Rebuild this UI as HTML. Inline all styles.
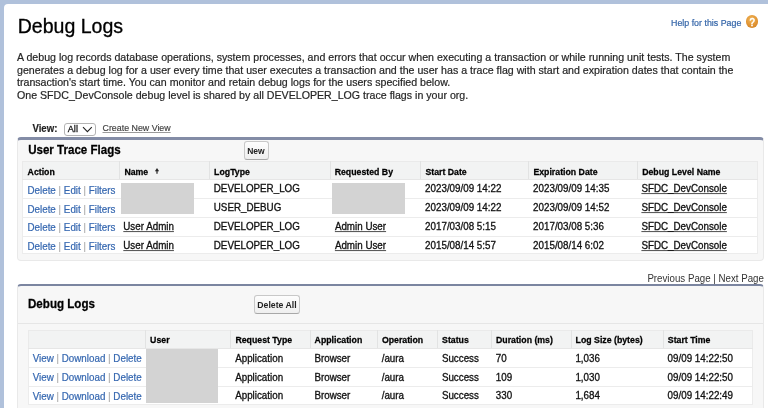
<!DOCTYPE html>
<html><head><meta charset="utf-8">
<style>
*{box-sizing:border-box;margin:0;padding:0}
html,body{width:768px;height:408px;overflow:hidden}
body{background:#b0c1db;font-family:"Liberation Sans",sans-serif;position:relative;color:#000}
.t{position:absolute;white-space:nowrap}
.r{position:absolute}
.lnk{color:#3567b0;-webkit-text-stroke:0.2px #3567b0}
.tb .t, .t.tb{-webkit-text-stroke:0.3px currentColor}
.t.hb{-webkit-text-stroke:0.25px #000}
.sep{color:#9a9a9a;-webkit-text-stroke:0 !important}
.u{text-decoration:underline;text-decoration-color:#555}
.b{font-weight:bold}
</style></head><body>
<div id="wrap" style="position:absolute;left:0;top:0;width:768px;height:408px;overflow:hidden;background:#b0c1db;filter:blur(0.3px)">
<div class="r" style="left:4px;top:4px;width:800px;height:450px;background:#fff;border-radius:4px"></div>
<div class="t " style="left:17.70px;top:15.00px;font-size:19.55px;line-height:22.46px;color:#000;-webkit-text-stroke:0.3px #000">Debug Logs</div>
<div class="t " style="left:671.00px;top:18.00px;font-size:8.85px;line-height:10.17px;transform:scaleY(1.050);transform-origin:0 8.00px;color:#3465a8;-webkit-text-stroke:0.2px #3465a8">Help for this Page</div>
<div class="r" style="left:746.0px;top:15.4px;width:12.4px;height:12.4px;border-radius:50%;background:radial-gradient(circle at 45% 35%,#f3b95a,#de9030 60%,#c97c1e);"></div>
<div class="t " style="left:749.50px;top:17.00px;font-size:9.60px;line-height:11.03px;transform:scaleY(1.100);transform-origin:0 9.00px;color:#fff;-webkit-text-stroke:0.5px #fff">?</div>
<div class="t " style="left:17.00px;top:51.00px;font-size:10.64px;line-height:12.23px;color:#262626;-webkit-text-stroke:0.2px #262626">A debug log records database operations, system processes, and errors that occur when executing a transaction or while running unit tests. The system</div>
<div class="t " style="left:17.00px;top:64.00px;font-size:10.64px;line-height:12.23px;color:#262626;-webkit-text-stroke:0.2px #262626">generates a debug log for a user every time that user executes a transaction and the user has a trace flag with start and expiration dates that contain the</div>
<div class="t " style="left:17.00px;top:76.00px;font-size:10.64px;line-height:12.23px;color:#262626;-webkit-text-stroke:0.2px #262626">transaction's start time. You can monitor and retain debug logs for the users specified below.</div>
<div class="t " style="left:17.00px;top:89.00px;font-size:10.64px;line-height:12.23px;color:#262626;-webkit-text-stroke:0.2px #262626">One SFDC_DevConsole debug level is shared by all DEVELOPER_LOG trace flags in your org.</div>
<div class="t b" style="left:32.40px;top:123.00px;font-size:9.65px;line-height:11.09px;transform:scaleY(1.080);transform-origin:0 9.00px;color:#222;-webkit-text-stroke:0.15px #222">View:</div>
<div class="r" style="left:64.2px;top:123px;width:31.8px;height:12.8px;border:1px solid #b4b4b4;border-radius:3px;background:#fff"></div>
<div class="t " style="left:67.80px;top:124.00px;font-size:9.10px;line-height:10.46px;transform:scaleY(1.060);transform-origin:0 8.00px;color:#111;-webkit-text-stroke:0.25px #111">All</div>
<svg class="r" style="left:81.5px;top:125.6px" width="11" height="7" viewBox="0 0 11 7"><path d="M1 1.2 L5.4 5.6 L9.8 1.2" fill="none" stroke="#222" stroke-width="1.1"/></svg>
<div class="t u" style="left:102.50px;top:123.00px;font-size:8.85px;line-height:10.17px;color:#404040;-webkit-text-stroke:0.15px #404040;text-decoration-color:#9a9a9a">Create New View</div>
<div class="r" style="left:16.50px;top:137.00px;width:747.10px;height:123.50px;background:#f7f7f7;border:1px solid #e9e9e9;border-top:3px solid #838ca6;border-radius:4px"></div>
<div class="t b hb" style="left:28.20px;top:144.00px;font-size:11.55px;line-height:13.27px;transform:scaleY(1.030);transform-origin:0 10.00px;">User Trace Flags</div>
<div class="r" style="left:244.20px;top:141.30px;width:24.50px;height:18.70px;border:1px solid #c8c8c8;border-bottom-color:#a8a8a8;border-radius:3px;background:linear-gradient(#fdfdfd,#efefef)"></div>
<div class="t b" style="left:247.20px;top:147.00px;font-size:8.50px;line-height:9.77px;transform:scaleY(1.120);transform-origin:0 8.00px;color:#222">New</div>
<div class="r" style="left:22.30px;top:161.30px;width:735.70px;height:18.50px;background:#f2f3f3;border:1px solid #eaeaea;border-bottom:none"></div>
<div class="r" style="left:22.30px;top:179.80px;width:735.70px;height:74.70px;background:#fff;border:1px solid #ececec;border-top:none"></div>
<div class="r" style="left:119.20px;top:161.30px;width:1.00px;height:18.50px;background:#e2e3e3"></div>
<div class="r" style="left:208.90px;top:161.30px;width:1.00px;height:18.50px;background:#e2e3e3"></div>
<div class="r" style="left:329.50px;top:161.30px;width:1.00px;height:18.50px;background:#e2e3e3"></div>
<div class="r" style="left:420.20px;top:161.30px;width:1.00px;height:18.50px;background:#e2e3e3"></div>
<div class="r" style="left:528.20px;top:161.30px;width:1.00px;height:18.50px;background:#e2e3e3"></div>
<div class="r" style="left:637.00px;top:161.30px;width:1.00px;height:18.50px;background:#e2e3e3"></div>
<div class="r" style="left:22.30px;top:198.10px;width:735.70px;height:1.00px;background:#ececec"></div>
<div class="r" style="left:22.30px;top:216.90px;width:735.70px;height:1.00px;background:#ececec"></div>
<div class="r" style="left:22.30px;top:235.60px;width:735.70px;height:1.00px;background:#ececec"></div>
<div class="r" style="left:22.30px;top:179.30px;width:735.70px;height:1.00px;background:#e6e6e6"></div>
<div class="t b hb" style="left:27.60px;top:167.00px;font-size:8.75px;line-height:10.05px;transform:scaleY(1.100);transform-origin:0 8.00px;">Action</div>
<div class="t b hb" style="left:124.40px;top:167.00px;font-size:8.75px;line-height:10.05px;transform:scaleY(1.100);transform-origin:0 8.00px;">Name</div>
<div class="t b hb" style="left:214.10px;top:167.00px;font-size:8.75px;line-height:10.05px;transform:scaleY(1.100);transform-origin:0 8.00px;">LogType</div>
<div class="t b hb" style="left:334.70px;top:167.00px;font-size:8.75px;line-height:10.05px;transform:scaleY(1.100);transform-origin:0 8.00px;">Requested By</div>
<div class="t b hb" style="left:425.40px;top:167.00px;font-size:8.75px;line-height:10.05px;transform:scaleY(1.100);transform-origin:0 8.00px;">Start Date</div>
<div class="t b hb" style="left:533.40px;top:167.00px;font-size:8.75px;line-height:10.05px;transform:scaleY(1.100);transform-origin:0 8.00px;">Expiration Date</div>
<div class="t b hb" style="left:642.20px;top:167.00px;font-size:8.75px;line-height:10.05px;transform:scaleY(1.100);transform-origin:0 8.00px;">Debug Level Name</div>
<svg class="r" style="left:154.0px;top:167.0px" width="6" height="8" viewBox="0 0 6 8"><path d="M3 6.8 V3" fill="none" stroke="#222" stroke-width="1.2"/><path d="M0.9 4.3 L3 1.0 L5.1 4.3 Z" fill="#222"/></svg>
<div class="t tb" style="left:27.50px;top:185.00px;font-size:9.80px;line-height:11.26px;transform:scaleY(1.040);transform-origin:0 9.00px;"><span class="lnk">Delete</span> <span class="sep">|</span> <span class="lnk">Edit</span> <span class="sep">|</span> <span class="lnk">Filters</span></div>
<div class="t  tb" style="left:213.80px;top:183.00px;font-size:9.80px;line-height:11.26px;transform:scaleY(1.040);transform-origin:0 9.00px;color:#111">DEVELOPER_LOG</div>
<div class="t  tb" style="left:425.10px;top:183.00px;font-size:9.80px;line-height:11.26px;transform:scaleY(1.040);transform-origin:0 9.00px;color:#111">2023/09/09 14:22</div>
<div class="t  tb" style="left:533.10px;top:183.00px;font-size:9.80px;line-height:11.26px;transform:scaleY(1.040);transform-origin:0 9.00px;color:#111">2023/09/09 14:35</div>
<div class="t u tb" style="left:641.40px;top:183.00px;font-size:9.80px;line-height:11.26px;transform:scaleY(1.040);transform-origin:0 9.00px;color:#111">SFDC_DevConsole</div>
<div class="t tb" style="left:27.50px;top:204.00px;font-size:9.80px;line-height:11.26px;transform:scaleY(1.040);transform-origin:0 9.00px;"><span class="lnk">Delete</span> <span class="sep">|</span> <span class="lnk">Edit</span> <span class="sep">|</span> <span class="lnk">Filters</span></div>
<div class="t  tb" style="left:213.80px;top:202.00px;font-size:9.80px;line-height:11.26px;transform:scaleY(1.040);transform-origin:0 9.00px;color:#111">USER_DEBUG</div>
<div class="t  tb" style="left:425.10px;top:202.00px;font-size:9.80px;line-height:11.26px;transform:scaleY(1.040);transform-origin:0 9.00px;color:#111">2023/09/09 14:22</div>
<div class="t  tb" style="left:533.10px;top:202.00px;font-size:9.80px;line-height:11.26px;transform:scaleY(1.040);transform-origin:0 9.00px;color:#111">2023/09/09 14:52</div>
<div class="t u tb" style="left:641.40px;top:202.00px;font-size:9.80px;line-height:11.26px;transform:scaleY(1.040);transform-origin:0 9.00px;color:#111">SFDC_DevConsole</div>
<div class="t tb" style="left:27.50px;top:222.00px;font-size:9.80px;line-height:11.26px;transform:scaleY(1.040);transform-origin:0 9.00px;"><span class="lnk">Delete</span> <span class="sep">|</span> <span class="lnk">Edit</span> <span class="sep">|</span> <span class="lnk">Filters</span></div>
<div class="t u tb" style="left:123.30px;top:221.00px;font-size:9.80px;line-height:11.26px;transform:scaleY(1.040);transform-origin:0 9.00px;color:#111">User Admin</div>
<div class="t  tb" style="left:213.80px;top:221.00px;font-size:9.80px;line-height:11.26px;transform:scaleY(1.040);transform-origin:0 9.00px;color:#111">DEVELOPER_LOG</div>
<div class="t u tb" style="left:334.90px;top:221.00px;font-size:9.80px;line-height:11.26px;transform:scaleY(1.040);transform-origin:0 9.00px;color:#111">Admin User</div>
<div class="t  tb" style="left:425.10px;top:221.00px;font-size:9.80px;line-height:11.26px;transform:scaleY(1.040);transform-origin:0 9.00px;color:#111">2017/03/08 5:15</div>
<div class="t  tb" style="left:533.10px;top:221.00px;font-size:9.80px;line-height:11.26px;transform:scaleY(1.040);transform-origin:0 9.00px;color:#111">2017/03/08 5:36</div>
<div class="t u tb" style="left:641.40px;top:221.00px;font-size:9.80px;line-height:11.26px;transform:scaleY(1.040);transform-origin:0 9.00px;color:#111">SFDC_DevConsole</div>
<div class="t tb" style="left:27.50px;top:241.00px;font-size:9.80px;line-height:11.26px;transform:scaleY(1.040);transform-origin:0 9.00px;"><span class="lnk">Delete</span> <span class="sep">|</span> <span class="lnk">Edit</span> <span class="sep">|</span> <span class="lnk">Filters</span></div>
<div class="t u tb" style="left:123.30px;top:240.00px;font-size:9.80px;line-height:11.26px;transform:scaleY(1.040);transform-origin:0 9.00px;color:#111">User Admin</div>
<div class="t  tb" style="left:213.80px;top:240.00px;font-size:9.80px;line-height:11.26px;transform:scaleY(1.040);transform-origin:0 9.00px;color:#111">DEVELOPER_LOG</div>
<div class="t u tb" style="left:334.90px;top:240.00px;font-size:9.80px;line-height:11.26px;transform:scaleY(1.040);transform-origin:0 9.00px;color:#111">Admin User</div>
<div class="t  tb" style="left:425.10px;top:240.00px;font-size:9.80px;line-height:11.26px;transform:scaleY(1.040);transform-origin:0 9.00px;color:#111">2015/08/14 5:57</div>
<div class="t  tb" style="left:533.10px;top:240.00px;font-size:9.80px;line-height:11.26px;transform:scaleY(1.040);transform-origin:0 9.00px;color:#111">2015/08/14 6:02</div>
<div class="t u tb" style="left:641.40px;top:240.00px;font-size:9.80px;line-height:11.26px;transform:scaleY(1.040);transform-origin:0 9.00px;color:#111">SFDC_DevConsole</div>
<div class="r" style="left:121.10px;top:182.90px;width:73.10px;height:31.20px;background:#d3d3d3"></div>
<div class="r" style="left:331.80px;top:182.90px;width:73.50px;height:31.20px;background:#d3d3d3"></div>
<div class="t " style="left:647.40px;top:273.00px;font-size:9.72px;line-height:11.17px;transform:scaleY(1.040);transform-origin:0 9.00px;color:#333">Previous Page | Next Page</div>
<div class="r" style="left:16.80px;top:284.40px;width:746.80px;height:145.60px;background:#f7f7f7;border:1px solid #e9e9e9;border-top:2px solid #7b85a0;border-radius:4px"></div>
<div class="t b hb" style="left:28.00px;top:297.00px;font-size:11.60px;line-height:13.33px;transform:scaleY(1.030);transform-origin:0 10.00px;">Debug Logs</div>
<div class="r" style="left:17.80px;top:322.60px;width:745.20px;height:1.00px;background:#e6e6e6"></div>
<div class="r" style="left:254.20px;top:295.20px;width:45.50px;height:18.80px;border:1px solid #c8c8c8;border-bottom-color:#a8a8a8;border-radius:3px;background:linear-gradient(#fdfdfd,#efefef)"></div>
<div class="t b" style="left:257.30px;top:300.00px;font-size:8.70px;line-height:10.00px;transform:scaleY(1.100);transform-origin:0 8.00px;color:#222">Delete All</div>
<div class="r" style="left:28.20px;top:330.20px;width:724.40px;height:18.40px;background:#f2f3f3;border:1px solid #eaeaea;border-bottom:none"></div>
<div class="r" style="left:28.20px;top:348.60px;width:724.40px;height:56.40px;background:#fff;border:1px solid #ececec;border-top:none"></div>
<div class="r" style="left:145.00px;top:330.20px;width:1.00px;height:18.40px;background:#e2e3e3"></div>
<div class="r" style="left:230.30px;top:330.20px;width:1.00px;height:18.40px;background:#e2e3e3"></div>
<div class="r" style="left:309.50px;top:330.20px;width:1.00px;height:18.40px;background:#e2e3e3"></div>
<div class="r" style="left:376.80px;top:330.20px;width:1.00px;height:18.40px;background:#e2e3e3"></div>
<div class="r" style="left:437.00px;top:330.20px;width:1.00px;height:18.40px;background:#e2e3e3"></div>
<div class="r" style="left:490.90px;top:330.20px;width:1.00px;height:18.40px;background:#e2e3e3"></div>
<div class="r" style="left:570.50px;top:330.20px;width:1.00px;height:18.40px;background:#e2e3e3"></div>
<div class="r" style="left:662.70px;top:330.20px;width:1.00px;height:18.40px;background:#e2e3e3"></div>
<div class="r" style="left:28.20px;top:367.00px;width:724.40px;height:1.00px;background:#ececec"></div>
<div class="r" style="left:28.20px;top:386.10px;width:724.40px;height:1.00px;background:#ececec"></div>
<div class="r" style="left:28.20px;top:348.10px;width:724.40px;height:1.00px;background:#e6e6e6"></div>
<div class="t b hb" style="left:150.10px;top:335.00px;font-size:8.75px;line-height:10.05px;transform:scaleY(1.060);transform-origin:0 8.00px;">User</div>
<div class="t b hb" style="left:235.40px;top:335.00px;font-size:8.75px;line-height:10.05px;transform:scaleY(1.060);transform-origin:0 8.00px;">Request Type</div>
<div class="t b hb" style="left:314.60px;top:335.00px;font-size:8.75px;line-height:10.05px;transform:scaleY(1.060);transform-origin:0 8.00px;">Application</div>
<div class="t b hb" style="left:381.90px;top:335.00px;font-size:8.75px;line-height:10.05px;transform:scaleY(1.060);transform-origin:0 8.00px;">Operation</div>
<div class="t b hb" style="left:442.10px;top:335.00px;font-size:8.75px;line-height:10.05px;transform:scaleY(1.060);transform-origin:0 8.00px;">Status</div>
<div class="t b hb" style="left:496.00px;top:335.00px;font-size:8.75px;line-height:10.05px;transform:scaleY(1.060);transform-origin:0 8.00px;">Duration (ms)</div>
<div class="t b hb" style="left:575.60px;top:335.00px;font-size:8.75px;line-height:10.05px;transform:scaleY(1.060);transform-origin:0 8.00px;">Log Size (bytes)</div>
<div class="t b hb" style="left:667.80px;top:335.00px;font-size:8.75px;line-height:10.05px;transform:scaleY(1.060);transform-origin:0 8.00px;">Start Time</div>
<div class="t tb" style="left:32.70px;top:353.00px;font-size:9.80px;line-height:11.26px;transform:scaleY(1.040);transform-origin:0 9.00px;"><span class="lnk">View</span> <span class="sep">|</span> <span class="lnk">Download</span> <span class="sep">|</span> <span class="lnk">Delete</span></div>
<div class="t tb" style="left:235.20px;top:353.00px;font-size:9.80px;line-height:11.26px;transform:scaleY(1.040);transform-origin:0 9.00px;color:#111">Application</div>
<div class="t tb" style="left:314.40px;top:353.00px;font-size:9.80px;line-height:11.26px;transform:scaleY(1.040);transform-origin:0 9.00px;color:#111">Browser</div>
<div class="t tb" style="left:381.70px;top:353.00px;font-size:9.80px;line-height:11.26px;transform:scaleY(1.040);transform-origin:0 9.00px;color:#111">/aura</div>
<div class="t tb" style="left:441.90px;top:353.00px;font-size:9.80px;line-height:11.26px;transform:scaleY(1.040);transform-origin:0 9.00px;color:#111">Success</div>
<div class="t tb" style="left:495.80px;top:353.00px;font-size:9.80px;line-height:11.26px;transform:scaleY(1.040);transform-origin:0 9.00px;color:#111">70</div>
<div class="t tb" style="left:575.40px;top:353.00px;font-size:9.80px;line-height:11.26px;transform:scaleY(1.040);transform-origin:0 9.00px;color:#111">1,036</div>
<div class="t tb" style="left:667.60px;top:353.00px;font-size:9.80px;line-height:11.26px;transform:scaleY(1.040);transform-origin:0 9.00px;color:#111">09/09 14:22:50</div>
<div class="t tb" style="left:32.70px;top:372.00px;font-size:9.80px;line-height:11.26px;transform:scaleY(1.040);transform-origin:0 9.00px;"><span class="lnk">View</span> <span class="sep">|</span> <span class="lnk">Download</span> <span class="sep">|</span> <span class="lnk">Delete</span></div>
<div class="t tb" style="left:235.20px;top:372.00px;font-size:9.80px;line-height:11.26px;transform:scaleY(1.040);transform-origin:0 9.00px;color:#111">Application</div>
<div class="t tb" style="left:314.40px;top:372.00px;font-size:9.80px;line-height:11.26px;transform:scaleY(1.040);transform-origin:0 9.00px;color:#111">Browser</div>
<div class="t tb" style="left:381.70px;top:372.00px;font-size:9.80px;line-height:11.26px;transform:scaleY(1.040);transform-origin:0 9.00px;color:#111">/aura</div>
<div class="t tb" style="left:441.90px;top:372.00px;font-size:9.80px;line-height:11.26px;transform:scaleY(1.040);transform-origin:0 9.00px;color:#111">Success</div>
<div class="t tb" style="left:495.80px;top:372.00px;font-size:9.80px;line-height:11.26px;transform:scaleY(1.040);transform-origin:0 9.00px;color:#111">109</div>
<div class="t tb" style="left:575.40px;top:372.00px;font-size:9.80px;line-height:11.26px;transform:scaleY(1.040);transform-origin:0 9.00px;color:#111">1,030</div>
<div class="t tb" style="left:667.60px;top:372.00px;font-size:9.80px;line-height:11.26px;transform:scaleY(1.040);transform-origin:0 9.00px;color:#111">09/09 14:22:50</div>
<div class="t tb" style="left:32.70px;top:391.00px;font-size:9.80px;line-height:11.26px;transform:scaleY(1.040);transform-origin:0 9.00px;"><span class="lnk">View</span> <span class="sep">|</span> <span class="lnk">Download</span> <span class="sep">|</span> <span class="lnk">Delete</span></div>
<div class="t tb" style="left:235.20px;top:390.00px;font-size:9.80px;line-height:11.26px;transform:scaleY(1.040);transform-origin:0 9.00px;color:#111">Application</div>
<div class="t tb" style="left:314.40px;top:390.00px;font-size:9.80px;line-height:11.26px;transform:scaleY(1.040);transform-origin:0 9.00px;color:#111">Browser</div>
<div class="t tb" style="left:381.70px;top:390.00px;font-size:9.80px;line-height:11.26px;transform:scaleY(1.040);transform-origin:0 9.00px;color:#111">/aura</div>
<div class="t tb" style="left:441.90px;top:390.00px;font-size:9.80px;line-height:11.26px;transform:scaleY(1.040);transform-origin:0 9.00px;color:#111">Success</div>
<div class="t tb" style="left:495.80px;top:390.00px;font-size:9.80px;line-height:11.26px;transform:scaleY(1.040);transform-origin:0 9.00px;color:#111">330</div>
<div class="t tb" style="left:575.40px;top:390.00px;font-size:9.80px;line-height:11.26px;transform:scaleY(1.040);transform-origin:0 9.00px;color:#111">1,684</div>
<div class="t tb" style="left:667.60px;top:390.00px;font-size:9.80px;line-height:11.26px;transform:scaleY(1.040);transform-origin:0 9.00px;color:#111">09/09 14:22:49</div>
<div class="r" style="left:146.00px;top:349.20px;width:72.00px;height:53.40px;background:#d3d3d3"></div>
</div></body></html>
